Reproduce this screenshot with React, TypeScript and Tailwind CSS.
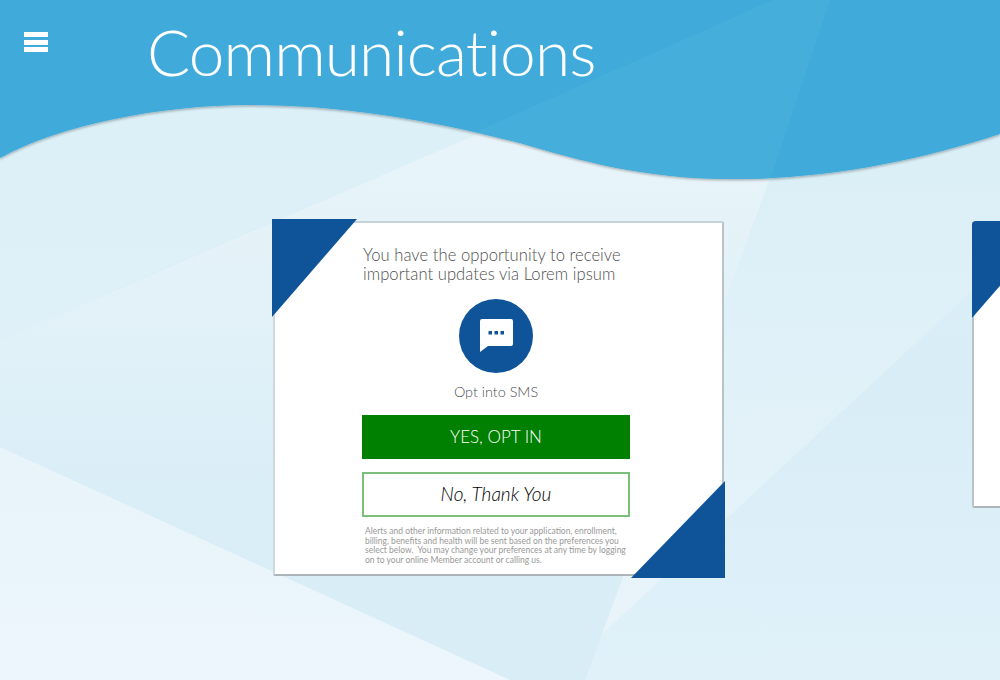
const bodyFont = "font-['Lato','Open_Sans',sans-serif]";

const Background = () => (
  <svg
    className="absolute inset-0 w-full h-full"
    viewBox="0 0 1000 680"
    preserveAspectRatio="none"
  >
    <defs>
      <linearGradient id="base" gradientUnits="userSpaceOnUse" x1="0" y1="0" x2="0" y2="680">
        <stop offset="0.25" stopColor="#dcf0f8" />
        <stop offset="0.55" stopColor="#d8edf6" />
        <stop offset="1" stopColor="#e0f1f9" />
      </linearGradient>
      <linearGradient id="corner" gradientUnits="userSpaceOnUse" x1="0" y1="150" x2="0" y2="340">
        <stop offset="0" stopColor="#dcf0f8" />
        <stop offset="1" stopColor="#dff0f8" />
      </linearGradient>
      <linearGradient id="band" gradientUnits="userSpaceOnUse" x1="0" y1="130" x2="0" y2="680">
        <stop offset="0" stopColor="#e8f4f9" />
        <stop offset="0.38" stopColor="#e1f1f8" />
        <stop offset="0.64" stopColor="#daeef7" />
        <stop offset="1" stopColor="#d8edf6" />
      </linearGradient>
      <linearGradient id="streak" gradientUnits="userSpaceOnUse" x1="0" y1="180" x2="0" y2="600">
        <stop offset="0" stopColor="#dbeff7" />
        <stop offset="0.75" stopColor="#e4f2f9" />
        <stop offset="1" stopColor="#e8f4fa" />
      </linearGradient>
      <linearGradient id="soft" gradientUnits="userSpaceOnUse" x1="0" y1="447" x2="0" y2="680">
        <stop offset="0" stopColor="#e8f4f9" />
        <stop offset="1" stopColor="#ecf6fc" />
      </linearGradient>
      <clipPath id="waveClip">
        <path d="M0 158 C60 125 160 105 250 105 C340 105 430 120 520 143 C580 160 640 179 735 179 C830 179 920 160 1000 134 L1000 0 L0 0 Z" />
      </clipPath>
      <filter id="waveShadow" x="-5%" y="-5%" width="110%" height="120%">
        <feDropShadow dx="0" dy="1.5" stdDeviation="1.2" floodColor="#000" floodOpacity="0.28" />
      </filter>
    </defs>
    <rect width="1000" height="680" fill="url(#base)" />
    <polygon points="0,150 480,130 0,340" fill="url(#corner)" />
    <polygon points="770,170 1000,120 1000,265 601,635" fill="url(#streak)" />
    <polygon points="0,340 480,133 773,170 585,680 510,680 0,447" fill="url(#band)" />
    <polygon points="0,447 510,680 0,680" fill="url(#soft)" />
    <path
      d="M0 158 C60 125 160 105 250 105 C340 105 430 120 520 143 C580 160 640 179 735 179 C830 179 920 160 1000 134 L1000 0 L0 0 Z"
      fill="#3fabda"
      filter="url(#waveShadow)"
    />
    <polygon
      points="480,130 773,0 830,0 770,180 500,180"
      fill="#45aeda"
      clipPath="url(#waveClip)"
    />
  </svg>
);

const CornerTriangles = () => (
  <>
    <div className="absolute left-[-3px] top-[-4px] w-[85px] h-[98px] bg-[#0f5499] [clip-path:polygon(0_0,100%_0,0_100%)]" />
    <div className="absolute right-[-3px] bottom-[-4px] w-[94px] h-[97px] bg-[#0f5499] [clip-path:polygon(100%_0,100%_100%,0_100%)]" />
  </>
);

export default function App() {
  return (
    <div className={`relative w-[1000px] h-[680px] overflow-hidden ${bodyFont}`}>
      <Background />

      <div className="relative flex items-start h-[221px]">
        <button className="flex flex-col gap-[2.5px] ml-6 mt-8">
          <span className="block w-6 h-[5px] bg-white" />
          <span className="block w-6 h-[5px] bg-white" />
          <span className="block w-6 h-[5px] bg-white" />
        </button>
        <h1 className="ml-[99px] mt-[13px] text-[64px] leading-[78px] font-light tracking-[-0.9px] text-white">
          Communications
        </h1>
      </div>

      <div className="relative flex gap-[248px] pl-[273px]">
        <div className="relative shrink-0 w-[451px] h-[355px] bg-white rounded-[2px] border-2 border-t-[#c6d3d9] border-l-[#cdd9de] border-r-[#b8c4ca] border-b-[#adb5b9]">
          <CornerTriangles />
          <div className="flex flex-col items-center pt-[23px] pr-[5px]">
            <p className="w-[268px] pl-[1px] text-[16.6px] leading-[19px] tracking-[0.05px] font-light text-[#4f4f4f]">
              You have the opportunity to receive important updates via Lorem ipsum
            </p>
            <div className="flex items-center justify-center w-[74px] h-[74px] mt-[15px] rounded-full bg-[#0f5499]">
              <svg width="34" height="34" viewBox="0 0 34 34">
                <path
                  d="M3 0H32a2 2 0 0 1 2 2V25a2 2 0 0 1-2 2H9L1 33V2a2 2 0 0 1 2-2Z"
                  fill="#fff"
                />
                <rect x="9.5" y="12" width="3.5" height="3.5" fill="#0f5499" />
                <rect x="15.5" y="12" width="3.5" height="3.5" fill="#0f5499" />
                <rect x="21.5" y="12" width="3.5" height="3.5" fill="#0f5499" />
              </svg>
            </div>
            <p className="mt-[10px] text-[14.4px] leading-[18px] font-light text-[#4f4f4f]">Opt into SMS</p>
            <button className="w-[268px] h-[44px] mt-[14px] bg-[#008000] text-white text-[17px] font-light">
              YES, OPT IN
            </button>
            <button className="w-[268px] h-[45px] mt-[13px] bg-white border-2 border-[#7bbf7b] text-black text-[19px] font-light italic">
              No, Thank You
            </button>
            <p className="w-[268px] pl-[3px] mt-[10px] text-[8.5px] leading-[9.5px] text-[#999999]">
              Alerts and other information related to your application, enrollment, billing, benefits and health will be sent based on the preferences you select below.&nbsp; You may change your preferences at any time by logging on to your online Member account or calling us.
            </p>
          </div>
        </div>

        <div className="relative shrink-0 w-[449px] h-[287px] bg-white rounded-[2px] border-t-2 border-l-2 border-b-2 border-t-[#c6d3d9] border-l-[#b8c4ca] border-b-[#adb5b9]">
          <div className="absolute left-[-2px] top-[-2px] w-[84px] h-[97px] bg-[#0f5499] rounded-tl-[4px] [clip-path:polygon(0_0,100%_0,0_100%)]" />
        </div>
      </div>
    </div>
  );
}
